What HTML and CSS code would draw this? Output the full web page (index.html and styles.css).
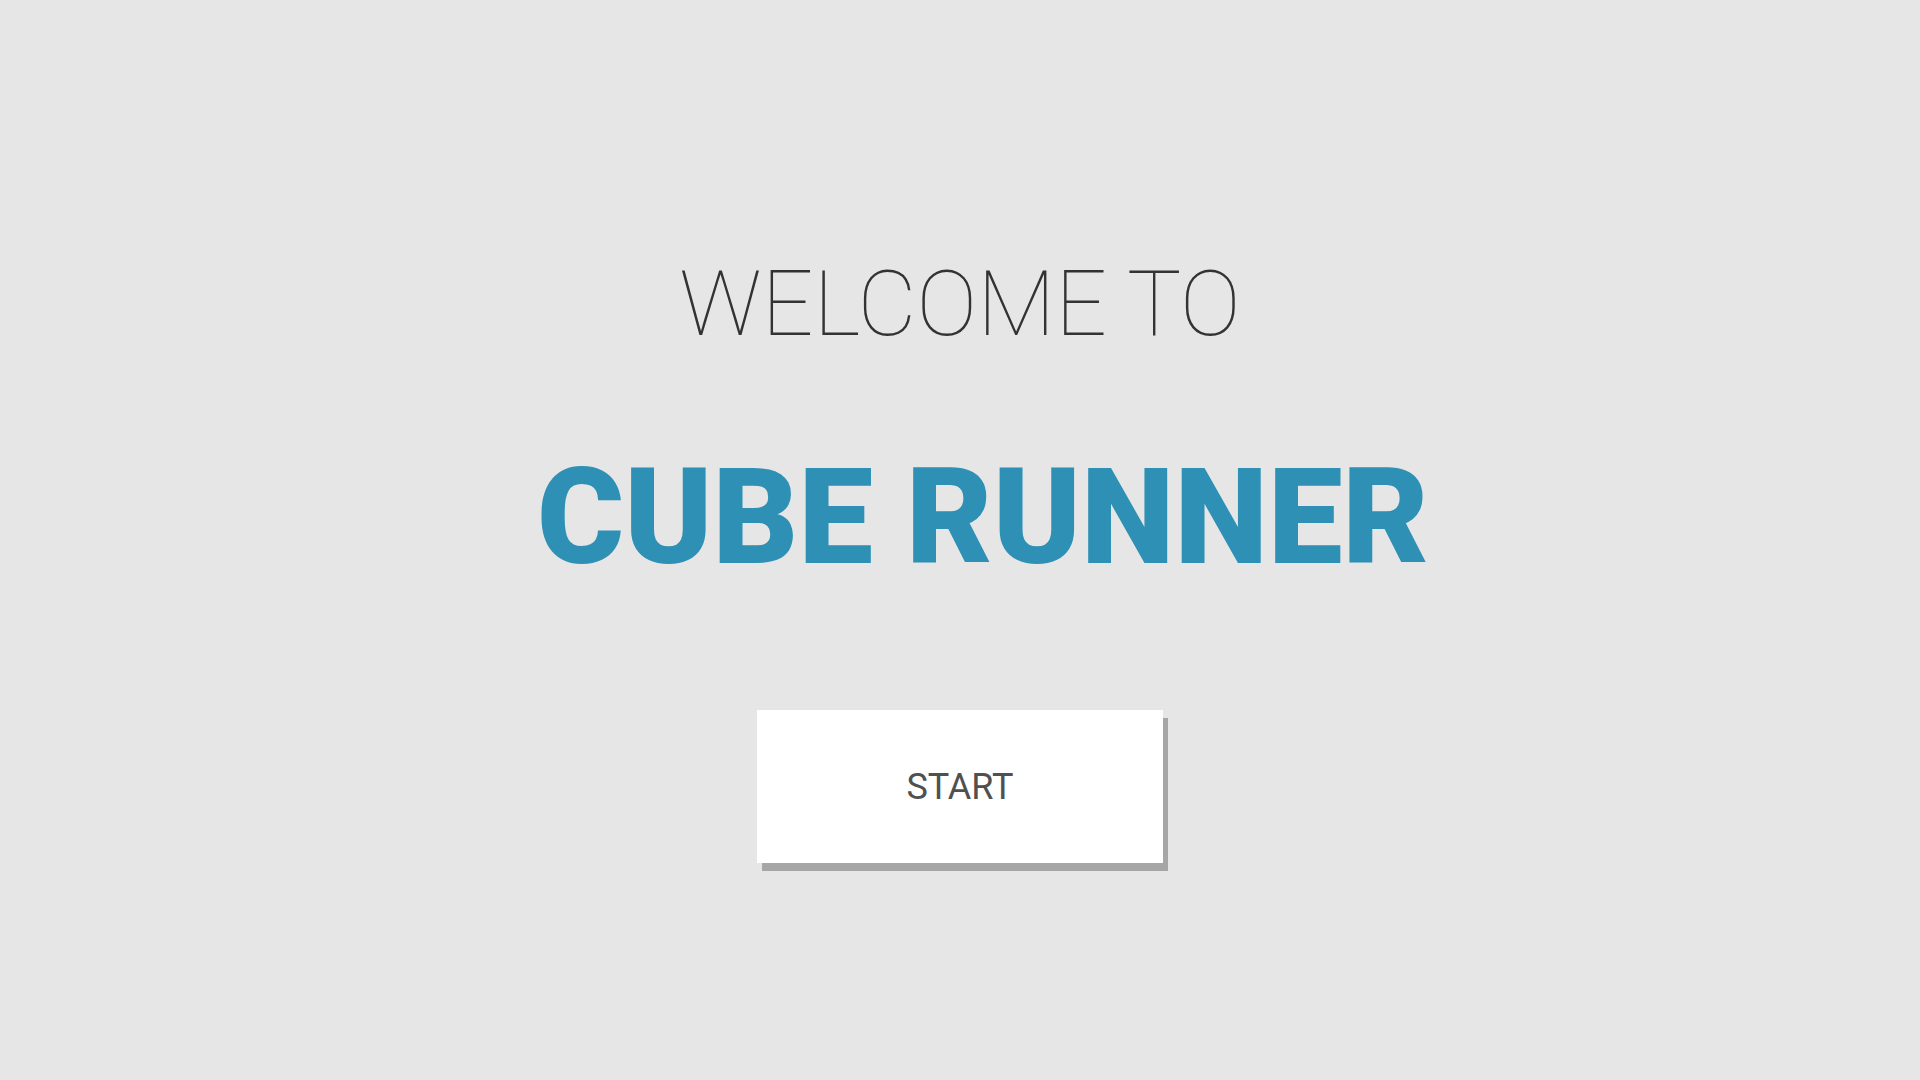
FILE: index.html
```html
<!DOCTYPE html>
<html>
<head>
<meta charset="utf-8">
<link rel="stylesheet" href="styles.css">
</head>
<body>
<main class="screen">
  <h2 class="welcome">WELCOME TO</h2>
  <h1 class="title">CUBE RUNNER</h1>
  <button class="start">START</button>
</main>
</body>
</html>
```
FILE: styles.css
```css
html, body {
  margin: 0;
  padding: 0;
  background: #e6e6e6;
  height: 100%;
}
.screen {
  display: flex;
  flex-direction: column;
  align-items: center;
  padding-top: 259px;
  font-family: Roboto, "Liberation Sans", sans-serif;
}
.welcome {
  margin: 0;
  font-size: 91px;
  line-height: 1;
  font-weight: 100;
  color: #333333;
}
.title {
  margin: 101px 0 0;
  padding-left: 46px;
  font-size: 133px;
  line-height: 1;
  font-weight: 900;
  color: #2e90b4;
}
.start {
  margin-top: 126px;
  width: 406px;
  height: 153px;
  border: none;
  background: #ffffff;
  box-shadow: 5px 8px 0 #a6a6a6;
  font-family: Roboto, "Liberation Sans", sans-serif;
  font-size: 36px;
  font-weight: 400;
  color: #505050;
  padding: 0;
}
```
